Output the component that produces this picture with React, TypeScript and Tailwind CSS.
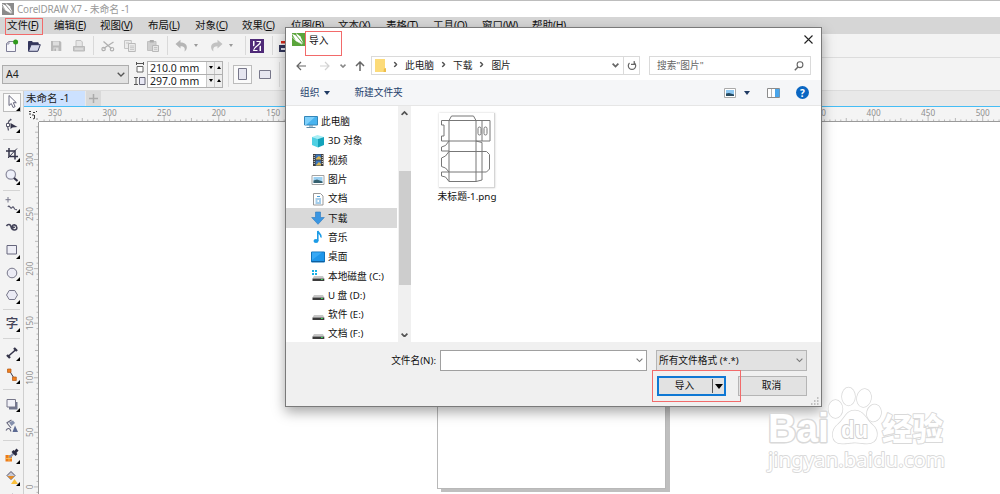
import type { ReactNode } from "react";

const menus = [
  ["文件", "F"],
  ["编辑", "E"],
  ["视图", "V"],
  ["布局", "L"],
  ["对象", "C"],
  ["效果", "C"],
  ["位图", "B"],
  ["文本", "X"],
  ["表格", "T"],
  ["工具", "O"],
  ["窗口", "W"],
  ["帮助", "H"],
];

function Svg({ w = 16, h = 16, children }: { w?: number; h?: number; children: ReactNode }) {
  return (
    <svg width={w} height={h} viewBox={`0 0 ${w} ${h}`} fill="none" className="block shrink-0">
      {children}
    </svg>
  );
}

function Chevron({ w = 8, color = "#555", bold = false }: { w?: number; color?: string; bold?: boolean }) {
  return (
    <svg width={w} height={w / 2 + 1} viewBox="0 0 8 5" fill="none" className="block shrink-0">
      <path d="M.7.7 4 4 7.3.7" stroke={color} strokeWidth={bold ? 2 : 1.3} />
    </svg>
  );
}

function Logo({ color, size }: { color: string; size: number }) {
  return (
    <svg width={size} height={size} viewBox="0 0 13 13" className="block shrink-0">
      <path d="M0 0h13v13H0z" fill={color} />
      <path d="M0 .8 3.800 2.600 11 11.200 4 8z" fill="#fff" />
      <path d="M3.800 0 8.500 3.400 11.500 10.600 5 2.800z" fill="#fff" />
      <path d="M0 3.500 3.500 7.500 10 11.200" stroke="#fff" strokeWidth=".6" fill="none" />
    </svg>
  );
}

/* ---------- standard toolbar ---------- */

const fileIcons = [
  <Svg key="new">
    <path d="M3.5 5.5 6 3.5h6.5v10h-9z" fill="#f6f6fb" stroke="#7d7d96" />
    <path d="M3.5 6H6V3.5" stroke="#7d7d96" strokeWidth=".8" />
    <circle cx="12.6" cy="4" r="2.5" fill="#2e9a1c" />
  </Svg>,
  <Svg key="open">
    <path d="M2.5 13V3.5H6l1.2 1.3h5V7" fill="#33365c" stroke="#33365c" />
    <path d="M2.5 13.3 5 6.700h9.300l-2.500 6.600z" fill="#d5d8ea" stroke="#33365c" />
  </Svg>,
  <Svg key="save">
    <path d="M3 3h9l1.3 1.3V13H3z" fill="#b9b9b9" />
    <path d="M5 3.5h6v4H5zM5.5 9.5h5V13h-5z" fill="#dedede" />
    <path d="M6.5 10.5h1.3V13H6.5z" fill="#aaa" />
  </Svg>,
  <Svg key="print">
    <path d="M5 8V2.5h5L11.3 4v4" fill="#e6e6e6" stroke="#c2c2c2" />
    <path d="M2.5 8.5h11V13h-11z" fill="#c9c9c9" stroke="#b9b9b9" />
    <path d="M4 11h8" stroke="#e9e9e9" />
  </Svg>,
];

const editIcons = [
  <Svg key="cut">
    <path d="m3.5 3.5 8 7M3.5 10.5 13.5 4" stroke="#b0b0b0" strokeWidth="1.3" />
    <circle cx="3.6" cy="11" r="1.7" stroke="#b0b0b0" strokeWidth="1.2" />
    <circle cx="12" cy="11.2" r="1.7" stroke="#b0b0b0" strokeWidth="1.2" />
  </Svg>,
  <Svg key="copy">
    <path d="M2.5 2.5h6.8v8H2.5z" fill="#ebebeb" stroke="#c4c4c4" />
    <path d="M6.5 5.5h6.8v8H6.5z" fill="#ebebeb" stroke="#b9b9b9" />
    <path d="M8 8h4M8 9.7h4M8 11.4h4M4 5h3" stroke="#bbb" strokeWidth=".8" />
  </Svg>,
  <Svg key="paste">
    <path d="M2.5 3.5h8.5v9H2.5z" fill="#cfcfcf" stroke="#c0c0c0" />
    <path d="M4.800 2h4v2.500h-4z" fill="#aaa" />
    <path d="M7.5 7.5h6v6h-6z" fill="#e6e6e6" stroke="#b9b9b9" />
    <path d="M9 9.5h3.3M9 11.3h3.3" stroke="#bbb" strokeWidth=".8" />
  </Svg>,
];

const undoPath = "M1.5 6 6.5 1.800v2.700c4.800 0 6.800 2.500 6.300 5.500-.2 1.500-1 2.700-2.300 3.500.9-3.300-.3-5.200-4-5.200V10.500z";

function Sep() {
  return <div className="h-[19px] w-px shrink-0 bg-[#d9d9d9]" />;
}

function StandardBar() {
  return (
    <div className="flex h-[24px] shrink-0 items-center border-b border-[#dcdcdc] bg-[#f3f3f3]">
      {fileIcons.map((icon, i) => (
        <div key={i} className="flex w-[22.6px] shrink-0 justify-center">
          {icon}
        </div>
      ))}
      <div className="w-[3px]" />
      <Sep />
      <div className="w-[2px]" />
      {editIcons.map((icon, i) => (
        <div key={i} className="flex w-[22.6px] shrink-0 justify-center">
          {icon}
        </div>
      ))}
      <div className="w-[3px]" />
      <Sep />
      <div className="flex w-[77px] items-center pl-[6px]">
        <Svg>
          <path d={undoPath} fill="#b5b5b5" />
        </Svg>
        <div className="ml-[4px] border-x-2 border-t-[3px] border-x-transparent border-t-[#999]" />
        <div className="ml-[10px] -scale-x-100">
          <Svg>
            <path d={undoPath} fill="#c2c2c2" />
          </Svg>
        </div>
        <div className="ml-[5px] border-x-2 border-t-[3px] border-x-transparent border-t-[#999]" />
      </div>
      <Sep />
      <div className="ml-[4px]">
        <Svg w={14} h={14}>
          <path d="M0 0h14v14H0z" fill="#4f2a78" />
          <path d="M3 2h1.500v4.500L3 7.500zM11 12H9.500V7.500L11 6.500z" fill="#fff" />
          <path d="M3.500 12c0-5.500 7-4.500 7-10M6.500 2.500h4M3.500 11.500h4" stroke="#fff" strokeWidth="1.200" />
        </Svg>
      </div>
      <div className="w-[8px]" />
      <Sep />
      <div className="ml-[5px]">
        <Svg>
          <path d="M1 7h12v7H1z" fill="#33365c" />
          <path d="M3 10h8v2H3z" fill="#e4e4ef" />
          <path d="M3 3h6v2.500H3z" fill="#d92b1c" />
        </Svg>
      </div>
    </div>
  );
}

/* ---------- property bar ---------- */

function Spinner({ value }: { value: string }) {
  return (
    <div className="flex h-[14px] w-[76px] border border-[#b0b0b0] bg-white">
      <div className="flex-1 pl-[2px] text-[10.500px] leading-[12px] whitespace-nowrap text-[#222]">{value}</div>
      <div className="flex w-[8px] items-center justify-center border-l border-[#c9c9c9] bg-[#eee]">
        <div className="border-x-[2.500px] border-t-[3px] border-x-transparent border-t-black" />
      </div>
      <div className="flex w-[8px] items-center justify-center border-l border-[#c9c9c9] bg-[#eee]">
        <div className="border-x-[2.500px] border-b-[3px] border-x-transparent border-b-black" />
      </div>
    </div>
  );
}

function PropertyBar() {
  return (
    <div className="flex h-[33px] shrink-0 items-center border-b border-[#dcdcdc] bg-[#f3f3f3] pl-[2px]">
      <div className="flex h-[19px] w-[127px] shrink-0 items-center justify-between border border-[#adadad] bg-[#e2e2e2] pr-[3px] pl-[3px] text-[10.500px] text-[#222]">
        <span className="pt-px">A4</span>
        <Chevron />
      </div>
      <div className="ml-[4px] flex w-[13px] flex-col items-center gap-[2px]">
        <Svg w={10} h={12}>
          <path d="M1.500 1v3M8.500 1v3M1.500 2.500h7" stroke="#555" />
          <path d="M2 5.500h6v5.500H2z" fill="#fff" stroke="#666" />
        </Svg>
        <Svg w={12} h={12}>
          <path d="M0 2.500h4M0 9.500h4M2 2.500v7" stroke="#555" />
          <path d="M5.500 2.500h5.500v7H5.500z" fill="#e8e8f4" stroke="#666677" />
        </Svg>
      </div>
      <div className="ml-px flex flex-col">
        <Spinner value="210.0 mm" />
        <div className="-mt-px">
          <Spinner value="297.0 mm" />
        </div>
      </div>
      <div className="ml-[5px] h-[25px] w-px bg-[#dcdcdc]" />
      <div className="ml-[4px] flex size-[19px] items-center justify-center border border-[#bcbcbc] bg-[#fafafa]">
        <Svg w={9} h={12}>
          <path d="M.5.5h8v11h-8z" fill="#e6e6f0" stroke="#77778a" />
        </Svg>
      </div>
      <div className="ml-[7px]">
        <Svg w={12} h={9}>
          <path d="M.5.5h11v8H.5z" fill="#e6e6f0" stroke="#77778a" />
        </Svg>
      </div>
      <div className="ml-[8px] h-[25px] w-px bg-[#dcdcdc]" />
    </div>
  );
}

/* ---------- toolbox ---------- */

const tools: (ReactNode | null)[] = [
  <Svg key="pick">
    <path d="M5 1.500v10l2.300-2 1.800 4 2-.9-1.800-3.900h3z" fill="#fff" stroke="#66667c" />
  </Svg>,
  <Svg key="shape">
    <path d="M4.500 13.500C3 9 4 4.500 7 2M4.500 4l3-1.500" stroke="#555568" strokeWidth="1.200" />
    <path d="M2.500 6.500h3v3h-3z" fill="#fff" stroke="#555568" />
    <path d="M6.500 6v6l2-1.500 5-.5z" fill="#35354a" />
  </Svg>,
  null,
  <Svg key="crop">
    <path d="M5 2v8.500h9M2 5h9v8.500" stroke="#35354a" strokeWidth="1.500" />
    <path d="m4 12 9-9.500" stroke="#35354a" />
  </Svg>,
  <Svg key="zoom">
    <circle cx="6.800" cy="6.500" r="4.700" fill="#eef0fa" stroke="#8a8a9c" strokeWidth="1.200" />
    <path d="m10 10 3.500 3" stroke="#35354a" strokeWidth="2.200" />
  </Svg>,
  null,
  <Svg key="freehand">
    <path d="M4 0v5.500M1.500 2.700h5.200" stroke="#77778a" />
    <path d="M4 10c1-3 2.500 2 3.500 1s1.500-2 2.500 0 1.500 2 3 1.500" stroke="#55556a" strokeWidth="1.200" />
  </Svg>,
  <Svg key="artistic">
    <path d="M2.500 7c1.500-2.500 4-1.500 4.500.5 1 4.500 6.300 4.300 5.800 1-.4-3.200-4.500-3.500-4.300-1 .2 1 1.500 1 2.300.5" stroke="#44445a" strokeWidth="1.600" />
  </Svg>,
  <Svg key="rect">
    <path d="M3 3.500h9.500v8.500H3z" fill="#eeeef6" stroke="#66667c" />
  </Svg>,
  <Svg key="ellipse">
    <circle cx="8" cy="8" r="4.800" fill="#ebebf5" stroke="#77778a" />
  </Svg>,
  <Svg key="polygon">
    <path d="M5.200 3.500h5.600L13.500 8l-2.700 4.500H5.200L2.500 8z" fill="#ebebf5" stroke="#77778a" />
  </Svg>,
  null,
  <span key="text" className="text-[12.500px] leading-[15px] font-medium text-[#44445a]">
    字
  </span>,
  null,
  <Svg key="dimension">
    <path d="m4 11.500 8-7" stroke="#35354a" strokeWidth="1.600" />
    <path d="m3 10 3 3M10 3l3 3" stroke="#35354a" strokeWidth="2.400" />
  </Svg>,
  <Svg key="connector">
    <path d="m5 3 5.500 9" stroke="#35354a" />
    <path d="M3.500 2H7v3.400H3.500zM8.500 10h3.800v3.500H8.500z" fill="#f0801e" stroke="#b35612" strokeWidth=".7" />
  </Svg>,
  null,
  <Svg key="shadow">
    <path d="M5 6h8.500v7.500H5z" fill="#71768f" />
    <path d="M3 3.500h8.500V11H3z" fill="#f1f1f8" stroke="#77778a" />
  </Svg>,
  <Svg key="transparency">
    <path d="m2.500 5 5-3M3 5l4 5M2 12.500c2-3.500 4-2 5 1" stroke="#66667c" strokeWidth="1.100" />
    <path d="m5 4.500 4-2 2 2.500-3.500 3z" fill="#8590ac" />
    <path d="m11 7.500 3 6.500H8.500z" fill="#5c6a93" />
  </Svg>,
  null,
  <Svg key="eyedropper">
    <path d="M1.500 8h6.500v6.500H1.500z" fill="#ec7b18" />
    <path d="M2 11.500h6M5 8v6" stroke="#ffc85e" strokeWidth=".8" />
    <path d="m5.500 10.500 5-5" stroke="#8b93ae" strokeWidth="2.200" />
    <path d="m8.500 4 4 4M10.500 6 13.500 2.500" stroke="#2a2a40" strokeWidth="2.800" />
  </Svg>,
  <Svg key="fill">
    <path d="m3 5.500 4-4 4 4-4 4z" fill="#c9c9d4" stroke="#55556a" />
    <path d="m3.500 6h7L7 9.500z" fill="#e58a22" />
    <path d="m10.500 9 3.500 5H7z" fill="#fbc13b" />
  </Svg>,
  <Svg key="outline">
    <path d="m5 8 4-6" stroke="#55556a" strokeWidth="1.500" />
  </Svg>,
];

function Toolbox() {
  return (
    <div className="flex w-[24px] shrink-0 flex-col overflow-hidden border-r border-[#cfcfcf] bg-[#f3f3f3]">
      {tools.map((tool, i) =>
        tool === null ? (
          <div key={i} className="flex h-[6.100px] shrink-0 items-center px-[3px]">
            <div className="h-px w-full bg-[#d4d4d4]" />
          </div>
        ) : (
          <div key={i} className="flex h-[22.600px] shrink-0 items-center pl-[3px]">
            <div
              className={
                "relative flex h-[19px] w-[18px] items-center justify-center border " +
                (i === 0 ? "border-[#bdbdbd] bg-[#fbfbfb]" : "border-transparent")
              }
            >
              {tool}
              {i !== 7 && i !== 18 && (
                <div className="absolute right-0 bottom-0 border-b-[4px] border-l-[4px] border-b-black border-l-transparent" />
              )}
            </div>
          </div>
        ),
      )}
    </div>
  );
}

/* ---------- rulers and drawing area ---------- */

const UNIT = 54.57;
const minor = Array.from({ length: 190 }, (_, i) => i);

function TopRuler() {
  return (
    <svg width="976" height="15" className="block shrink-0 bg-[#f4f4f4]" fontSize="8.2" fill="#8f8f8f" textAnchor="middle">
      {minor.map((i) => {
        const x = 31 + (i - 2) * (UNIT / 10);
        if (x < 15) return null;
        const h = (i - 2) % 10 === 0 ? 5 : (i - 2) % 5 === 0 ? 3 : 1.5;
        return <path key={i} d={`M${x} 14V${14 - h}`} stroke="#aaa" strokeWidth=".8" />;
      })}
      {Array.from({ length: 18 }, (_, i) => (
        <text key={i} x={31 + i * UNIT} y="9">
          {Math.abs(350 - i * 50)}
        </text>
      ))}
      <path d="M15 14.500H976" stroke="#9a9a9a" />
      <path d="M5 4.500h2M6 6v2M9 5.500h2M8 8h2M6 10.500h1M10.500 8v3M9 12l2-1M12 4.500h1M12.500 12h1" stroke="#333" />
    </svg>
  );
}

function SideRuler() {
  return (
    <svg width="15" height="372" className="block shrink-0 bg-[#f4f4f4]" fontSize="8.2" fill="#8f8f8f" textAnchor="middle">
      {minor.slice(0, 75).map((i) => {
        const y = 37.5 + (i - 6) * (UNIT / 10);
        const h = (i - 6) % 10 === 0 ? 4 : (i - 6) % 5 === 0 ? 3 : 1.5;
        return <path key={i} d={`M14 ${y}H${14 - h}`} stroke="#aaa" strokeWidth=".8" />;
      })}
      {Array.from({ length: 7 }, (_, i) => (
        <text key={i} transform={`translate(9 ${37.5 + i * UNIT}) rotate(-90)`}>
          {300 - i * 50}
        </text>
      ))}
      <path d="M14.500 0V372" stroke="#9a9a9a" />
    </svg>
  );
}

function Workspace() {
  return (
    <div className="flex min-w-0 flex-1 flex-col">
      <div className="flex h-[15px] shrink-0 bg-[#e9e9e9]">
        <div className="w-[61px] bg-[#cce1ff] pl-[2px] text-[10.500px] leading-[15px] whitespace-nowrap text-[#222]">
          未命名 -1
        </div>
        <div className="ml-px flex w-[15px] items-center justify-center bg-[#d9d9d9]">
          <Svg w={9} h={9}>
            <path d="M4.500 0v9M0 4.500h9" stroke="#aaa" strokeWidth="1.500" />
          </Svg>
        </div>
      </div>
      <div className="h-px shrink-0 bg-[#45bdf5]" />
      <TopRuler />
      <div className="flex min-h-0 flex-1">
        <SideRuler />
        <div className="relative flex-1 overflow-hidden bg-white">
          <div className="absolute top-[42px] left-[398px] h-[325px] w-[229px] border border-[#b8b8b8] bg-white shadow-[4px_3px_0_#bfbfbf]" />
        </div>
      </div>
    </div>
  );
}

/* ---------- import dialog ---------- */

function Drive({ system = false }: { system?: boolean }) {
  return (
    <Svg w={14} h={14}>
      {system && <path d="M1 1h2v2H1zM4 1h2v2H4zM1 4h2v2H1zM4 4h2v2H4z" fill="#17b1e7" />}
      <path d="M3 7h9l1.200 2.500H1.500z" fill="#c7c7c7" />
      <path d="M1.500 9.500h11.800V12H1.500z" fill="#3c3c3c" />
      <path d="M10 10.500h1.800" stroke="#3ee05c" />
    </Svg>
  );
}

const tree: { label: string; icon: ReactNode }[] = [
  {
    label: "此电脑",
    icon: (
      <Svg w={14} h={14}>
        <path d="M.5 1.500h13v8.500H.5z" fill="#48b3ef" stroke="#3486b8" />
        <path d="M1 2h10l-9 8H1z" fill="#7ed0fb" />
        <path d="M5 11h4M2.500 12.500h9" stroke="#5f8aa6" />
      </Svg>
    ),
  },
  {
    label: "3D 对象",
    icon: (
      <Svg w={14} h={14}>
        <path d="m1 3 5.500-2L13 3 7 5z" fill="#a7eef5" />
        <path d="m1 3 6 2v8.500L1 11z" fill="#4fd0e3" />
        <path d="m13 3-6 2v8.500l6-2.500z" fill="#13a3bb" />
      </Svg>
    ),
  },
  {
    label: "视频",
    icon: (
      <Svg w={14} h={14}>
        <path d="M2 1h10.500v12H2z" fill="#3c3c3c" />
        <path d="M4.500 1.500h5.500v5H4.500z" fill="#3b77bd" />
        <path d="M4.500 7.500h5.500v5H4.500z" fill="#3b77bd" />
        <path d="m5 5.500 3-2.500 2 2v1.500H5zM5 12l3-3 2 2v1.500H5z" fill="#d9b34d" />
        <path d="M3.200 2v10M11.300 2v10" stroke="#eee" strokeDasharray="1 1" />
      </Svg>
    ),
  },
  {
    label: "图片",
    icon: (
      <Svg w={14} h={14}>
        <path d="M1 2.500h12v9H1z" fill="#fff" stroke="#a3a3a3" />
        <path d="M2.500 4h9v6h-9z" fill="#9dd1f2" />
        <path d="M2.500 7.500 6 6.500l5.500 2V10h-9z" fill="#35606f" />
      </Svg>
    ),
  },
  {
    label: "文档",
    icon: (
      <Svg w={14} h={14}>
        <path d="M2.500 1.500h7l2.500 2.500v9H2.500z" fill="#fff" stroke="#999" />
        <path d="M6 4.500h3M4.500 7h5.500M4.500 9h2M8 9h2M4.500 11h5.500" stroke="#4b9cd6" />
      </Svg>
    ),
  },
  {
    label: "下载",
    icon: (
      <Svg w={14} h={14}>
        <path d="M4.500 1h5v5.500h3.800L7 13.300.7 6.500h3.800z" fill="#3a96e2" stroke="#2c79bd" strokeWidth=".6" />
      </Svg>
    ),
  },
  {
    label: "音乐",
    icon: (
      <Svg w={14} h={14}>
        <path d="M6.800 11V1c.5 2.500 3.800 2.800 3.200 6.500" stroke="#1c9be6" strokeWidth="1.600" />
        <ellipse cx="5" cy="11" rx="2.500" ry="2" fill="#1c9be6" />
      </Svg>
    ),
  },
  {
    label: "桌面",
    icon: (
      <Svg w={14} h={14}>
        <path d="M.5 2h13v10H.5z" fill="#1e96ea" stroke="#1173ba" />
        <path d="M1 11.500h12" stroke="#0e5f9e" />
        <path d="M1 2.500h10L1 10z" fill="#37a9f5" />
      </Svg>
    ),
  },
  { label: "本地磁盘 (C:)", icon: <Drive system /> },
  { label: "U 盘 (D:)", icon: <Drive /> },
  { label: "软件 (E:)", icon: <Drive /> },
  { label: "文档 (F:)", icon: <Drive /> },
];

function Tree() {
  return (
    <div className="flex h-[236px] w-[125px] shrink-0 overflow-hidden">
      <div className="w-[111px] shrink-0 pt-[6px]">
        {tree.map((node, i) => (
          <div
            key={node.label}
            className={
              "flex h-[19.300px] items-center gap-[3px] text-[9.700px] whitespace-nowrap text-[#111] " +
              (i === 0 ? "pl-[18px] " : "pl-[25px] ") +
              (node.label === "下载" ? "bg-[#d9d9d9]" : "")
            }
          >
            {node.icon}
            <span className="pt-[1.500px]">{node.label}</span>
          </div>
        ))}
      </div>
      <div className="ml-px flex w-[13px] shrink-0 flex-col items-center bg-[#f0f0f0]">
        <div className="flex h-[14px] items-center">
          <div className="rotate-180">
            <Chevron w={7} bold />
          </div>
        </div>
        <div className="mt-[51px] h-[114px] w-[12px] bg-[#cdcdcd]" />
        <div className="mt-auto flex h-[14px] items-center">
          <Chevron w={7} bold />
        </div>
      </div>
    </div>
  );
}

function BoxTemplate() {
  return (
    <Svg w={55} h={74}>
      <g stroke="#777" strokeWidth="1">
        <path d="M10 7.500h27v61H10zM10 7.500 12.500 3h22l2.500 4.500M10 28h27M10 38.500h27M10 59h27" />
        <path d="M37 7.500h14V28H37M43 7.500V28M10 7.500H2.500V12H5v11H2.500v5H10" />
        <path d="M10 28 6.500 32.500l-4 1.500v4H10M37 28l6 1.500v9M37 38.500h10.500l3 3v14.500l-3 3H37M10 38.500 6.500 43 2.500 45v8.500l4 1.500 3.500 4" />
        <path d="M10 59H2.500v4l4 1 3.500 4.500M37 68.500l6-1.500v-8M43 38.500V59" />
        <rect x="39" y="14" width="3" height="8" rx="1.500" />
        <rect x="45" y="14" width="3" height="8" rx="1.500" />
      </g>
    </Svg>
  );
}

function AddressRow() {
  return (
    <div className="flex h-[19px] items-center text-[9.700px] text-[#222]">
      <div className="flex w-[85px] items-center pl-[10px]">
        <Svg w={10} h={10}>
          <path d="M5 1 1 5l4 4M1 5h9" stroke="#666" strokeWidth="1.200" />
        </Svg>
        <div className="ml-[14px]">
          <Svg w={10} h={10}>
            <path d="m5 1 4 4-4 4M9 5H0" stroke="#d2d2d2" strokeWidth="1.200" />
          </Svg>
        </div>
        <div className="ml-[10px]">
          <Chevron w={6} color="#888" bold />
        </div>
        <div className="ml-[9px]">
          <Svg w={10} h={10}>
            <path d="m1 5 4-4 4 4M5 1v9" stroke="#666" strokeWidth="1.500" />
          </Svg>
        </div>
      </div>
      <div className="flex h-[19px] w-[269px] border border-[#dadada] bg-white">
        <div className="flex flex-1 items-center pl-[3px]">
          <Svg w={11} h={14}>
            <path d="M0 0h10v9h1v4H0z" fill="#fcdb79" />
            <path d="M9 9.500h2V13H8.500z" fill="#edbd4b" />
          </Svg>
          {["此电脑", "下载", "图片"].map((part) => (
            <div key={part} className="flex items-center">
              <div className="mx-[7px] flex w-[5px] -rotate-90 justify-center">
                <Chevron w={6} bold />
              </div>
              <span className="pt-px">{part}</span>
            </div>
          ))}
          <div className="mr-[4px] ml-auto">
            <Chevron w={7} color="#666" bold />
          </div>
        </div>
        <div className="flex w-[16px] items-center justify-center border-l border-[#dadada]">
          <Svg w={10} h={10}>
            <path d="M2.500 2a3.700 3.700 0 1 0 5 0M2.800 0v3.300H6" stroke="#666" strokeWidth="1.200" transform="matrix(-1 0 0 1 10 0)" />
          </Svg>
        </div>
      </div>
      <div className="ml-[9px] flex h-[19px] w-[162px] items-center justify-between border border-[#dadada] pr-[6px] pl-[7px] text-[#666]">
        <span className="pt-px">搜索"图片"</span>
        <Svg w={10} h={10}>
          <circle cx="6" cy="3.700" r="2.900" stroke="#666" strokeWidth="1.100" />
          <path d="M4 6 .8 9.300" stroke="#666" strokeWidth="1.400" />
        </Svg>
      </div>
    </div>
  );
}

function CommandBar() {
  return (
    <div className="mt-[5px] flex h-[26px] shrink-0 items-center border-b border-[#e6e6e6] bg-[#f5f6f8] pl-[14px] text-[9.700px] text-[#24406b]">
      <span className="pt-px">组织</span>
      <div className="ml-[5px] border-x-[3px] border-t-[4px] border-x-transparent border-t-[#1f3a63]" />
      <span className="ml-[24px] pt-px">新建文件夹</span>
      <div className="mr-[12px] ml-auto flex items-center">
        <Svg w={12} h={10}>
          <path d="M.5.5h11v9H.5z" fill="#fff" stroke="#aaa" />
          <path d="M2 2h8v6H2z" fill="#8cc7f2" />
          <path d="M2 5.500 5 5l5 1.500V8H2z" fill="#27495f" />
        </Svg>
        <div className="ml-[8px] border-x-[3px] border-t-[4px] border-x-transparent border-t-[#1f3a63]" />
        <div className="ml-[17px]">
          <Svg w={13} h={10}>
            <path d="M.5.5h12v9H.5z" fill="#fff" stroke="#8c8c8c" />
            <path d="M4.500 1v8" stroke="#b5b5b5" />
            <path d="M8 1h4.500v8H8z" fill="#4aa5ea" />
          </Svg>
        </div>
        <div className="ml-[16px] flex size-[13px] items-center justify-center rounded-full bg-[#0a66c2] text-[10px] leading-none font-bold text-white">
          ?
        </div>
      </div>
    </div>
  );
}

function ImportDialog() {
  return (
    <div className="absolute top-[27px] left-[285px] flex h-[380px] w-[537px] flex-col border border-[#7a7a7a] bg-white shadow-[0_5px_12px_rgba(0,0,0,0.35)]">
      <div className="flex h-[28px] shrink-0 items-start pt-[5px] pr-[8px] pl-[6px]">
        <Logo color="#5ba53c" size={13} />
        <span className="ml-[4px] text-[9.700px] leading-[15px] text-[#111]">导入</span>
        <div className="mt-[2px] ml-auto">
          <Svg w={9} h={9}>
            <path d="m.5.5 8 8M8.500.5l-8 8" stroke="#222" strokeWidth="1.100" />
          </Svg>
        </div>
      </div>
      <AddressRow />
      <CommandBar />
      <div className="flex h-[236px] shrink-0">
        <Tree />
        <div className="flex w-[112px] flex-col items-center pt-[7px]">
          <div className="border-r border-b border-[#d5d5d5] bg-white shadow-[0_0_2px_rgba(0,0,0,0.2)]">
            <BoxTemplate />
          </div>
          <span className="mt-[2px] text-[9.800px] leading-[14px] whitespace-nowrap text-[#111]">未标题-1.png</span>
        </div>
      </div>
      <div className="relative flex flex-1 flex-col bg-[#f0f0f0] pt-[8px] text-[9.700px] text-[#111]">
        <div className="flex items-center">
          <span className="w-[150px] pt-[2px] text-right">文件名(N):</span>
          <div className="ml-[4px] flex h-[21px] w-[207px] items-center justify-end border border-[#a0a0a0] bg-white pr-[3px]">
            <Chevron w={7} color="#777" />
          </div>
          <div className="ml-[9px] flex h-[21px] w-[151px] items-center justify-between border border-[#b5b5b5] bg-[#e2e2e2] pr-[3px] pl-[2px]">
            <span className="pt-[1.500px]">所有文件格式 (*.*)</span>
            <Chevron w={7} color="#777" />
          </div>
        </div>
        <div className="mt-[5px] flex pl-[371px]">
          <div className="flex h-[20px] w-[69px] border-2 border-[#0f78d4] bg-[#e2e2e2]">
            <div className="flex flex-1 items-center justify-center pr-[2px]">导入</div>
            <div className="my-px flex w-[12px] items-center justify-center border-l border-[#555]">
              <div className="border-x-[4px] border-t-[5px] border-x-transparent border-t-black" />
            </div>
          </div>
          <div className="ml-[12px] flex h-[20px] w-[69px] items-center justify-center border border-[#b5b5b5] bg-[#e2e2e2] pr-[2px]">
            取消
          </div>
        </div>
        <div className="absolute right-[2px] bottom-[1px]">
          <Svg w={8} h={8}>
            <path d="M6 1h1.500M3 4h1.500M6 4h1.500M0 7h1.500M3 7h1.500M6 7h1.500" stroke="#b0b0b0" strokeWidth="1.500" />
          </Svg>
        </div>
      </div>
    </div>
  );
}

function Watermark() {
  return (
    <svg
      width="190"
      height="95"
      className="absolute top-[384px] left-[762px]"
      fill="#fff"
      stroke="#d9d9d9"
      strokeWidth="2"
      strokeLinejoin="round"
      paintOrder="stroke"
    >
      <text x="6" y="58" fontSize="40" fontWeight="700" textLength="61" lengthAdjust="spacingAndGlyphs" fontFamily="Liberation Sans, sans-serif" strokeWidth="3">
        Bai
      </text>
      <g strokeWidth="1.500">
        <ellipse cx="73.500" cy="25" rx="7" ry="9" />
        <ellipse cx="86.500" cy="12.500" rx="6.500" ry="9" />
        <ellipse cx="102" cy="14" rx="7" ry="9" transform="rotate(12 102 14)" />
        <ellipse cx="112" cy="29" rx="7" ry="8.500" transform="rotate(15 112 29)" />
        <path d="M93 26.500c-9 0-10 8-17 14-7 5-8 19 4 19 6 0 8-1 13-1s7 1 12 1c12 0 12-13 6-18-7-6-9-15-18-15z" />
      </g>
      <text x="79" y="54" fontSize="24" fontWeight="700" textLength="27" lengthAdjust="spacingAndGlyphs" fontFamily="Liberation Sans, sans-serif" stroke="#d0d0d0">
        du
      </text>
      <text x="120" y="56" fontSize="31" fontWeight="900" textLength="61" lengthAdjust="spacingAndGlyphs" fontFamily="Noto Sans CJK SC, sans-serif">
        经验
      </text>
      <text x="6" y="83" fontSize="20" textLength="177" lengthAdjust="spacingAndGlyphs" fontFamily="Noto Sans, sans-serif" strokeWidth="1.800">
        jingyan.baidu.com
      </text>
    </svg>
  );
}

export default function App() {
  return (
    <div className="relative flex h-[494px] w-[1000px] flex-col overflow-hidden bg-white font-['Noto_Sans','Noto_Sans_CJK_SC',sans-serif]">
      <div className="flex h-[17px] shrink-0 items-center gap-[3px] border-t border-[#bdbdbd] pl-[2px] text-[9.900px] leading-[16px] tracking-[-0.150px] text-[#999]">
        <Logo color="#8b8b8b" size={12} />
        CorelDRAW X7 - 未命名 -1
      </div>
      <div className="grid h-[17px] shrink-0 grid-cols-[47px_46px_48px_47px_47px_49px_47px_48px_47px_49px_50px_60px] bg-[#d6d6d6] pl-[7px] text-[10.500px] leading-[16px] text-[#111]">
        {menus.map(([label, key]) => (
          <span key={label} className="whitespace-nowrap">
            {label}
            <span className="tracking-[-0.5px]">
              (<u>{key}</u>)
            </span>
          </span>
        ))}
      </div>
      <StandardBar />
      <PropertyBar />
      <div className="flex min-h-0 flex-1">
        <Toolbox />
        <Workspace />
      </div>
      <ImportDialog />
      <Watermark />
      {/* red callouts */}
      <div className="absolute top-[18px] left-[5px] h-[17px] w-[38px] border border-[#f26a6a]" />
      <div className="absolute top-[31px] left-[305px] h-[25px] w-[37px] border border-[#f26a6a]" />
      <div className="absolute top-[370px] left-[652px] h-[32px] w-[89px] border border-[#f26a6a]" />
    </div>
  );
}
